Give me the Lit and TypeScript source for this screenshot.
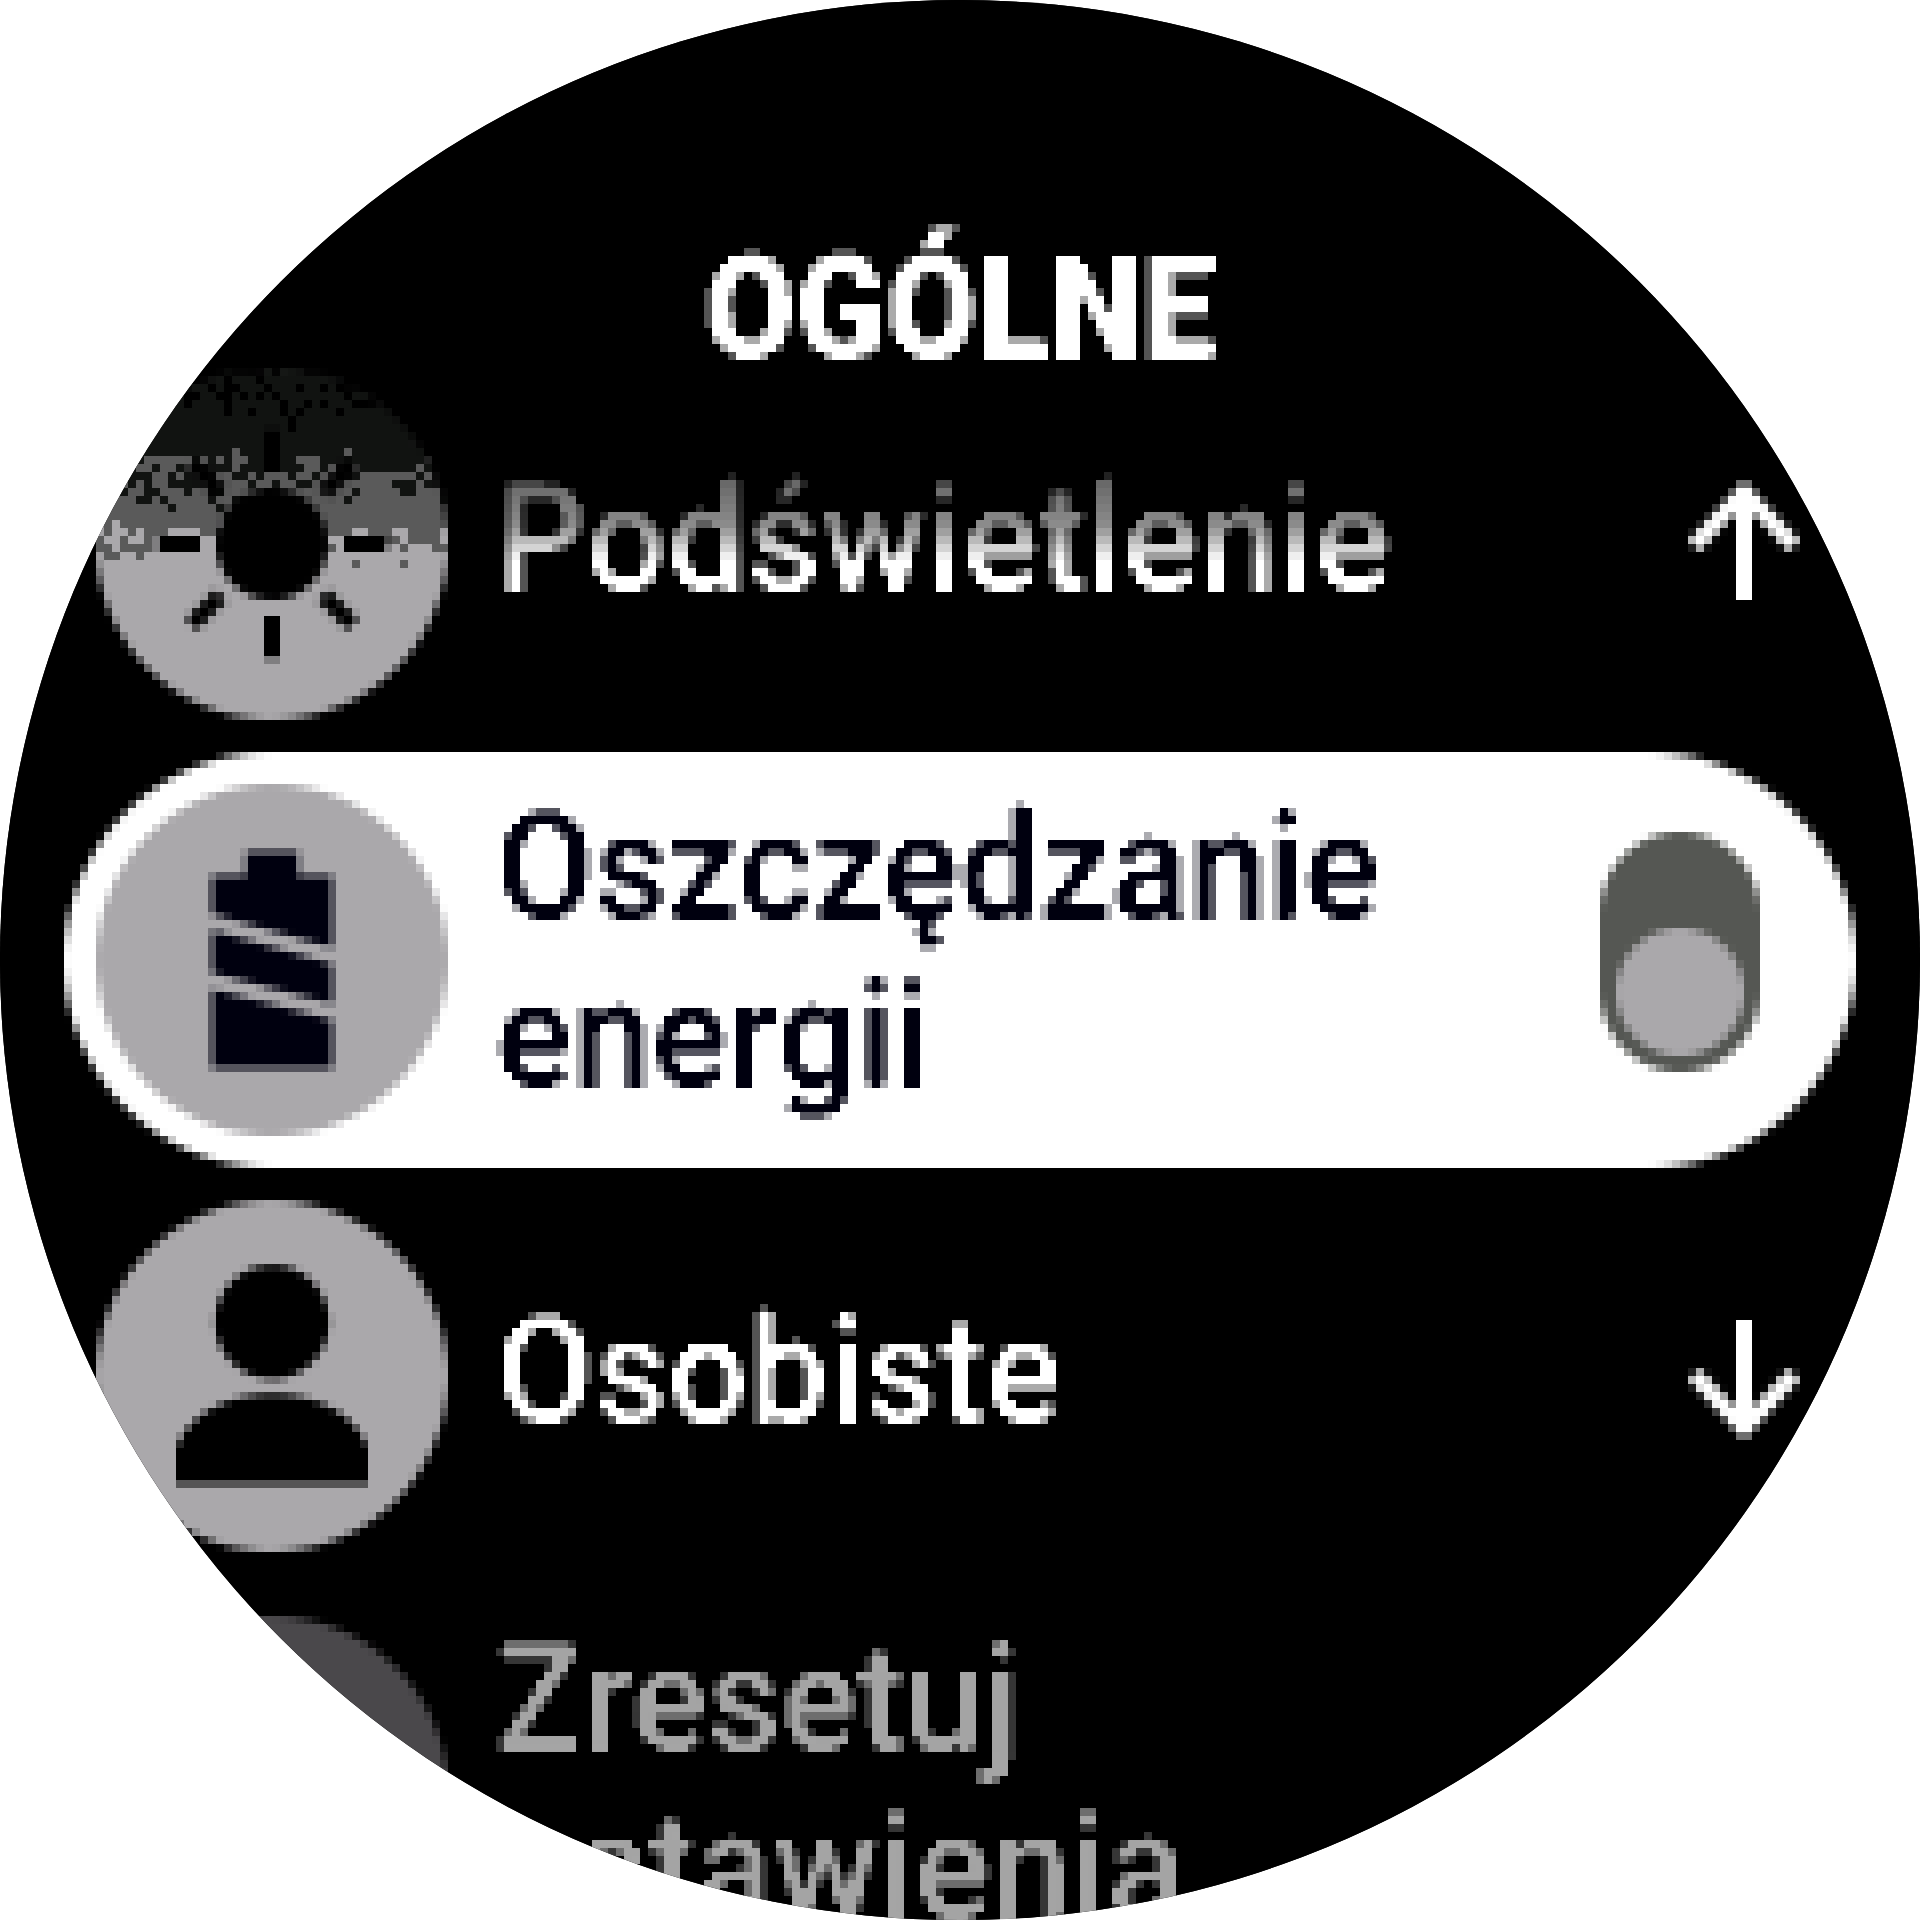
import { LitElement, html, css, svg } from 'lit';
import { customElement } from 'lit/decorators.js';

const ones = Array(64).fill(1).join(' ');

// the watch screen is an 8px grid, so the dark top of the sun icon is dithered in cells
function ditherCells() {
  const colors = ['#000000', '#111311', '#5a5a5a', '#aaa8ab'];
  let seed = 4711;
  const rand = () => {
    seed = (seed * 1103515245 + 12345) & 0x7fffffff;
    return seed / 0x7fffffff;
  };
  const cells = [];
  for (let y = 368; y < 584; y += 8) {
    let level = 3;
    if (y < 430) level = 0.4 + ((y - 368) / 62) * 0.6;
    else if (y < 440) level = 1;
    else if (y < 505) level = 1 + (y - 440) / 65;
    else if (y < 515) level = 2;
    else level = Math.min(3, 2 + (y - 515) / 50);
    for (let x = 96; x < 448; x += 8) {
      const pick = Math.min(3, Math.floor(level + rand()));
      cells.push(svg`<rect x=${x - 96} y=${y - 368} width="8" height="8" fill=${colors[pick]}></rect>`);
    }
  }
  return cells;
}

const sunRays = [0, 45, 90, 135, 180, 225, 270, 315];

@customElement('app-root')
export class AppRoot extends LitElement {
  static styles = css`
    :host {
      display: block;
      width: 1920px;
      height: 1920px;
      background: #fff;
      font-family: Roboto, "Liberation Sans", sans-serif;
    }

    .filters {
      position: absolute;
      width: 0;
      height: 0;
    }

    .screen {
      width: 1920px;
      height: 1920px;
      border-radius: 50%;
      overflow: hidden;
      background: #000;
    }

    .content {
      width: 1920px;
      height: 1920px;
      overflow: hidden;
      background: #000;
      filter: url(#px);
    }

    .title {
      box-sizing: border-box;
      height: 336px;
      padding-top: 226px;
      text-align: center;
      font-size: 146px;
      line-height: 168px;
      font-weight: 900;
      color: #fff;
      filter: url(#px-text);
    }

    .title span {
      display: inline-block;
      transform: scaleX(0.908);
    }

    .row {
      box-sizing: border-box;
      height: 416px;
      margin: 0 64px;
      padding-left: 32px;
      display: flex;
      align-items: center;
      gap: 48px;
      border-radius: 208px;
      color: #fff;
    }

    .row.selected {
      background: #fff;
      color: #00000f;
    }

    .row.dim {
      color: #a4a4a4;
    }

    .icon {
      flex: none;
      width: 352px;
      height: 352px;
      display: block;
    }

    .label {
      width: 1000px;
      padding-bottom: 8px;
      font-size: 150px;
      line-height: 168px;
      font-weight: 500;
      filter: url(#px-text);
    }

    .label.two {
      padding-bottom: 16px;
    }

    .label div {
      transform-origin: 0 0;
      transform: scaleX(0.95);
    }

    .label.fade {
      -webkit-mask-image: linear-gradient(to bottom, rgba(0, 0, 0, 0.4) 24px, rgba(0, 0, 0, 0.55) 70px, #000 105px);
      mask-image: linear-gradient(to bottom, rgba(0, 0, 0, 0.4) 24px, rgba(0, 0, 0, 0.55) 70px, #000 105px);
    }

    .arrow {
      flex: none;
      width: 112px;
      height: 128px;
      margin-left: auto;
      margin-right: 56px;
      display: block;
    }

    .arrow.up {
      margin-bottom: 16px;
    }

    .arrow.down {
      margin-top: 16px;
    }

    .toggle {
      flex: none;
      box-sizing: border-box;
      width: 160px;
      height: 240px;
      margin-left: auto;
      margin-right: 96px;
      margin-bottom: 16px;
      padding: 96px 16px 16px;
      border-radius: 80px;
      background: #555753;
    }

    .knob {
      width: 128px;
      height: 128px;
      border-radius: 50%;
      background: #aaa8ab;
    }
  `;

  sunIcon() {
    return html`<svg class="icon" viewBox="0 0 352 352">
      <defs>
        <clipPath id="sun-clip"><circle cx="176" cy="176" r="176"></circle></clipPath>
      </defs>
      <g clip-path="url(#sun-clip)">
        <rect width="352" height="352" fill="#aaa8ab"></rect>
        ${ditherCells()}
      </g>
      <circle cx="176" cy="176" r="56" fill="#000"></circle>
      ${sunRays.map(
        (a) => svg`<rect x="168" y="248" width="16" height="42" fill="#000" transform="rotate(${a} 176 176)"></rect>`
      )}
    </svg>`;
  }

  batteryIcon() {
    return html`<svg class="icon" viewBox="0 0 352 352">
      <circle cx="176" cy="176" r="176" fill="#aaa8ab"></circle>
      <path d="M150 68h52v24h34v192H116V92h34z" fill="#00000f"></path>
      <path d="M112 137l128 36M112 196l128 33" stroke="#aaa8ab" stroke-width="16" fill="none"></path>
    </svg>`;
  }

  personIcon() {
    return html`<svg class="icon" viewBox="0 0 352 352">
      <circle cx="176" cy="176" r="176" fill="#aaa8ab"></circle>
      <circle cx="176" cy="122" r="57" fill="#000"></circle>
      <path d="M80 284v-36c14-36 54-54 96-54s82 18 96 54v36z" fill="#000"></path>
    </svg>`;
  }

  arrow(dir: string) {
    const flip = dir === 'down' ? 'matrix(1 0 0 -1 0 128)' : '';
    return html`<svg class="arrow ${dir}" viewBox="0 0 112 128">
      <g transform=${flip} fill="none" stroke="#fff" stroke-width="16">
        <path d="M56 20V128"></path>
        <path d="M6 74L56 20L106 74"></path>
      </g>
    </svg>`;
  }

  render() {
    return html`
      <svg class="filters">
        <filter id="px" x="0" y="0" width="1920" height="1920" filterUnits="userSpaceOnUse" primitiveUnits="userSpaceOnUse" color-interpolation-filters="sRGB">
          <feConvolveMatrix order="8" kernelMatrix=${ones} divisor="64" targetX="0" targetY="0" edgeMode="none" preserveAlpha="false" result="avg"></feConvolveMatrix>
          <feFlood x="0" y="0" width="1" height="1" flood-color="#000"></feFlood>
          <feComposite width="8" height="8"></feComposite>
          <feTile result="grid"></feTile>
          <feComposite in="avg" in2="grid" operator="in"></feComposite>
          <feConvolveMatrix order="8" kernelMatrix=${ones} divisor="1" targetX="7" targetY="7" edgeMode="none" preserveAlpha="false"></feConvolveMatrix>
        </filter>
        <filter id="px-text" x="0" y="0" width="1920" height="1920" filterUnits="userSpaceOnUse" primitiveUnits="userSpaceOnUse" color-interpolation-filters="sRGB">
          <feConvolveMatrix order="8" kernelMatrix=${ones} divisor="64" targetX="0" targetY="0" edgeMode="none" preserveAlpha="false" result="avg"></feConvolveMatrix>
          <feFlood x="0" y="0" width="1" height="1" flood-color="#000"></feFlood>
          <feComposite width="8" height="8"></feComposite>
          <feTile result="grid"></feTile>
          <feComposite in="avg" in2="grid" operator="in"></feComposite>
          <feConvolveMatrix order="8" kernelMatrix=${ones} divisor="1" targetX="7" targetY="7" edgeMode="none" preserveAlpha="false"></feConvolveMatrix>
          <feComponentTransfer>
            <feFuncA type="discrete" tableValues="0 0.33 0.67 1"></feFuncA>
          </feComponentTransfer>
        </filter>
      </svg>
      <div class="screen">
        <div class="content">
          <div class="title"><span>OGÓLNE</span></div>
          <div class="row">
            ${this.sunIcon()}
            <div class="label fade"><div>Podświetlenie</div></div>
            ${this.arrow('up')}
          </div>
          <div class="row selected">
            ${this.batteryIcon()}
            <div class="label two"><div>Oszczędzanie energii</div></div>
            <div class="toggle"><div class="knob"></div></div>
          </div>
          <div class="row">
            ${this.personIcon()}
            <div class="label"><div>Osobiste</div></div>
            ${this.arrow('down')}
          </div>
          <div class="row dim">
            <svg class="icon" viewBox="0 0 352 352"><circle cx="176" cy="176" r="176" fill="#4a484b"></circle></svg>
            <div class="label two"><div>Zresetuj ustawienia</div></div>
          </div>
        </div>
      </div>
    `;
  }
}
